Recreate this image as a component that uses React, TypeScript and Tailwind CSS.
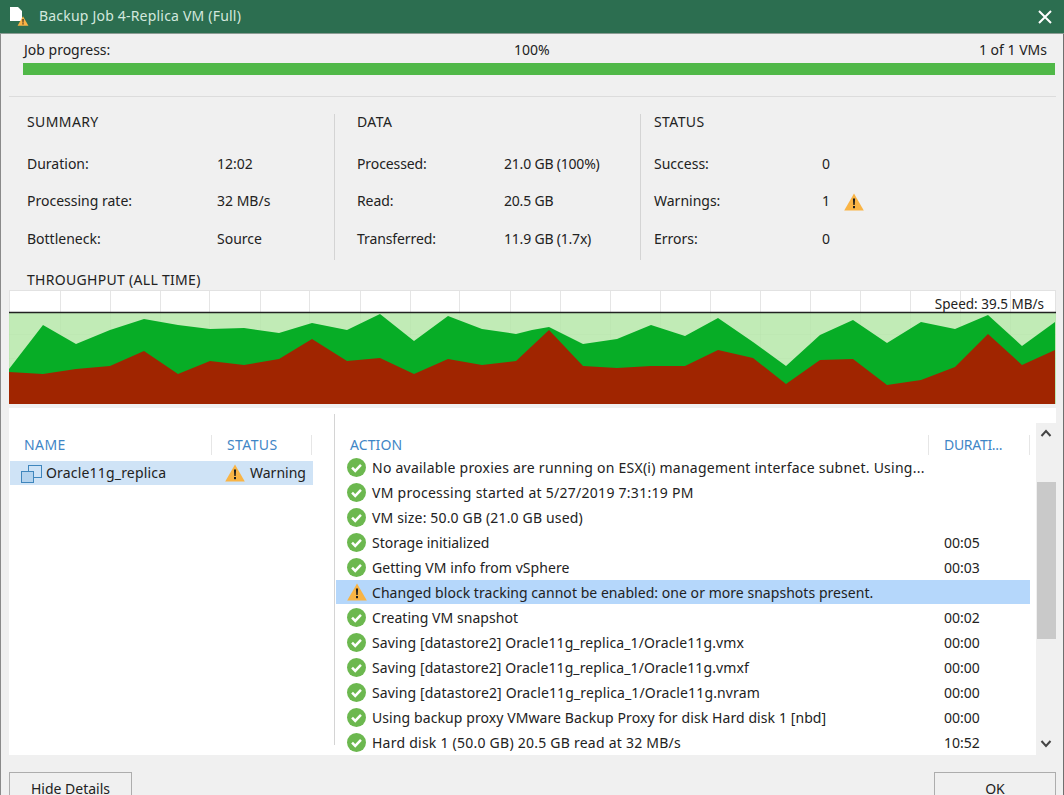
const GREEN_LINE = '9,369 43,325 76,344 110,330 144,319 178,325 210,329 244,328 279,333 312,323 347,330 380,314 414,341 448,316 482,329 516,334 532,330 549,327 583,344 617,339 651,325 685,336 718,318 753,342 786,366 820,335 853,320 887,343 921,322 955,329 988,315 1022,346 1055,322';
const RED_LINE = '9,372 43,374 76,369 110,366 144,351 178,374 210,361 244,365 279,359 312,339 347,361 380,358 414,374 448,359 482,365 516,361 532,346 549,330 583,366 617,368 651,366 685,366 718,350 753,358 786,384 820,360 853,359 887,385 921,380 955,367 988,334 1022,365 1055,350';

const ACTIONS = [
  { text: 'No available proxies are running on ESX(i) management interface subnet. Using...', time: '', track: 'tracking-[0.24px]' },
  { text: 'VM processing started at 5/27/2019 7:31:19 PM', time: '', track: 'tracking-[0.27px]' },
  { text: 'VM size: 50.0 GB (21.0 GB used)', time: '', track: 'tracking-[0.16px]' },
  { text: 'Storage initialized', time: '00:05', track: '' },
  { text: 'Getting VM info from vSphere', time: '00:03', track: 'tracking-[0.07px]' },
  { text: 'Changed block tracking cannot be enabled: one or more snapshots present.', time: '', warn: true, track: 'tracking-[0.04px]' },
  { text: 'Creating VM snapshot', time: '00:02', track: 'tracking-[0.05px]' },
  { text: 'Saving [datastore2] Oracle11g_replica_1/Oracle11g.vmx', time: '00:00', track: 'tracking-[0.11px]' },
  { text: 'Saving [datastore2] Oracle11g_replica_1/Oracle11g.vmxf', time: '00:00', track: 'tracking-[0.11px]' },
  { text: 'Saving [datastore2] Oracle11g_replica_1/Oracle11g.nvram', time: '00:00', track: 'tracking-[0.13px]' },
  { text: 'Using backup proxy VMware Backup Proxy for disk Hard disk 1 [nbd]', time: '00:00', track: 'tracking-[0.09px]' },
  { text: 'Hard disk 1 (50.0 GB) 20.5 GB read at 32 MB/s', time: '10:52', track: 'tracking-[0.24px]' },
];

const STATS = [
  {
    title: 'SUMMARY',
    box: 'w-[334px] pl-[26px] border-r border-[#d4d4d4]',
    label: 'w-[190px]',
    value: '',
    rows: [['Duration:', '12:02'], ['Processing rate:', '32 MB/s'], ['Bottleneck:', 'Source']],
  },
  {
    title: 'DATA',
    box: 'w-[306px] pl-[22px] border-r border-[#d4d4d4]',
    label: 'w-[147px] tracking-[-0.1px]',
    value: 'tracking-[-0.2px]',
    rows: [['Processed:', '21.0 GB (100%)'], ['Read:', '20.5 GB'], ['Transferred:', '11.9 GB (1.7x)']],
  },
  {
    title: 'STATUS',
    box: 'flex-1 pl-[13px]',
    label: 'w-[168px]',
    value: '',
    rows: [['Success:', '0'], ['Warnings:', '1'], ['Errors:', '0']],
  },
];

function WarnIcon({ className }: { className?: string }) {
  return (
    <svg viewBox="0 0 20 18" className={className}>
      <path d="M10 0.5 L19.8 17.5 L0.2 17.5 Z" fill="#f9b445" />
      <path d="M8.9 5.5 H11.1 L10.7 12 H9.3 Z" fill="#1c1c1c" />
      <rect x="9" y="13" width="2" height="2.2" fill="#1c1c1c" />
    </svg>
  );
}

function CheckIcon() {
  return (
    <svg viewBox="0 0 18 18" className="h-[19px] w-[19px] shrink-0">
      <circle cx="9" cy="9" r="9" fill="#6cb84f" />
      <path d="M4.8 9.2 L7.8 12.2 L13.2 6.6" fill="none" stroke="#fff" strokeWidth="2.4" />
    </svg>
  );
}

function VmIcon() {
  return (
    <svg viewBox="0 0 21 20" className="h-5 w-[21px] shrink-0" fill="none" stroke="#3f86bd" strokeWidth="1">
      <rect x="7.5" y="2.5" width="13" height="12" />
      <rect x="0.5" y="8.5" width="12" height="11" fill="#b4d3ee" />
    </svg>
  );
}

function Chart() {
  const vertical = [60, 110, 160, 209, 260, 309, 360, 410, 459, 510, 560, 610, 660, 710, 760, 810, 860, 910, 960, 1010];
  return (
    <div className="relative ml-[8px] h-[114px] w-[1047px] bg-white">
      <svg viewBox="9 290 1047 114" className="block h-[114px] w-[1047px]">
        <rect x="9.5" y="290.5" width="1046" height="113" fill="#fff" stroke="#e2e2e2" />
        {vertical.map((x) => (
          <line key={x} x1={x + 0.5} x2={x + 0.5} y1="291" y2="404" stroke="#000" strokeOpacity="0.1" />
        ))}
        <line x1="9" x2="1056" y1="334.5" y2="334.5" stroke="#000" strokeOpacity="0.08" />
        <line x1="9" x2="1056" y1="358.5" y2="358.5" stroke="#000" strokeOpacity="0.08" />
        <rect x="9" y="313" width="1047" height="91" fill="#b6e8a9" fillOpacity="0.85" />
        <polygon points={`${GREEN_LINE} 1055,404 9,404`} fill="#07ad26" />
        <polygon points={`${RED_LINE} 1055,404 9,404`} fill="#a02500" />
        <line x1="9" x2="1056" y1="312.5" y2="312.5" stroke="#222" strokeWidth="1.4" />
      </svg>
      <span className="absolute right-[12px] top-[5px] text-[13.5px] leading-[18px] text-[#222]">Speed: 39.5 MB/s</span>
    </div>
  );
}

export default function App() {
  return (
    <div className="h-[795px] w-[1064px] overflow-hidden bg-[#f0f0f0] font-['Noto_Sans',sans-serif] text-[14px] text-[#222]">
      <div className="flex h-[34px] items-center border-b border-[#8b9c94] bg-[#2c6e50] text-[#d3e8de]">
        <div className="relative ml-[10px] h-[26px] w-[20px]">
          <svg viewBox="0 0 20 26" className="h-[26px] w-[20px]">
            <path d="M0 3 H8 L12 7 V17 H0 Z" fill="#fff" />
          </svg>
          <WarnIcon className="absolute bottom-[4px] right-[1px] h-[10px] w-[12px]" />
        </div>
        <span className="mb-[2px] ml-[9px] tracking-[0.2px]">Backup Job 4-Replica VM (Full)</span>
        <svg viewBox="0 0 14 14" className="ml-auto mr-[12px] h-[14px] w-[14px]" stroke="#fff" strokeWidth="2">
          <path d="M1 1 L13 13 M13 1 L1 13" />
        </svg>
      </div>

      <div className="h-[761px] border-x border-l-[#8a8a8a] border-r-[#6f6f6f]">
        <div className="ml-[8px] h-[63px] w-[1047px] border-b border-[#dcdcdc] pl-[14px]">
          <div className="flex h-[29px] items-center pr-[9px] pt-[2px] pb-[1px]">
            <span className="w-[491px] pl-[1px]">Job progress:</span>
            <span>100%</span>
            <span className="ml-auto">1 of 1 VMs</span>
          </div>
          <div className="h-[12px] w-[1032px] bg-[#50b848]" />
        </div>

        <div className="flex pt-[17px]">
          {STATS.map((col) => (
            <div key={col.title} className={`h-[146px] ${col.box}`}>
              <div className="h-4 leading-4 tracking-[0.4px]">{col.title}</div>
              <div className="mt-[23px] flex flex-col gap-[17.5px]">
                {col.rows.map(([label, value]) => (
                  <div key={label} className="flex h-5 items-center">
                    <span className={col.label}>{label}</span>
                    <span className={col.value}>{value}</span>
                    {label === 'Warnings:' && <WarnIcon className="ml-[14px] h-[18px] w-5 translate-y-px" />}
                  </div>
                ))}
              </div>
            </div>
          ))}
        </div>

        <div className="mt-[10px] h-5 pl-[26px] leading-5 tracking-[0.3px]">THROUGHPUT (ALL TIME)</div>
        <Chart />

        <div className="ml-[8px] mt-[4px] flex h-[347px] w-[1047px] bg-white">
          <div className="my-[6px] mb-[10px] w-[326px] border-r border-[#d4d4d4]">
            <div className="mt-[21px] flex h-5 items-center text-[#3f86c6]">
              <span className="w-[203px] border-r border-[#e6e6e6] pl-[15px] leading-5 tracking-[0.4px]">NAME</span>
              <span className="w-[100px] border-r border-[#e6e6e6] pl-[15px] leading-5 tracking-[0.4px]">STATUS</span>
            </div>
            <div className="ml-[1px] mt-[6px] flex h-6 w-[303px] items-center bg-[#cfe3f6]">
              <span className="ml-[11px]"><VmIcon /></span>
              <span className="ml-[4px] w-[179px] -translate-y-px tracking-[0.18px]">Oracle11g_replica</span>
              <WarnIcon className="h-[18px] w-5" />
              <span className="ml-[5px] -translate-y-px">Warning</span>
            </div>
          </div>

          <div className="flex min-w-0 flex-1 flex-col">
            <div className="mt-[27px] flex h-5 shrink-0 items-center text-[#3f86c6]">
              <span className="w-[594px] border-r border-[#e6e6e6] pl-[15px] leading-5 tracking-[0.1px]">ACTION</span>
              <span className="w-[101px] border-r border-[#e6e6e6] pl-[15px] leading-5 tracking-[-0.3px]">DURATI...</span>
            </div>
            <div>
              {ACTIONS.map((a) => (
                <div key={a.text} className="h-[25px]">
                  <div className={`ml-[1px] flex w-[694px] items-center ${a.warn ? 'h-[24px] bg-[#b5d7fb]' : 'h-[25px]'}`}>
                    <span className="ml-[11px] flex w-[25px] shrink-0 items-center">
                      {a.warn ? <WarnIcon className="h-[18px] w-5" /> : <CheckIcon />}
                    </span>
                    <span className={`w-[572px] shrink-0 whitespace-nowrap ${a.track}`}>{a.text}</span>
                    <span>{a.time}</span>
                  </div>
                </div>
              ))}
            </div>
          </div>

          <div className="mt-[15px] flex w-[20px] shrink-0 flex-col items-center bg-[#f0f0f0] text-[#555]">
            <svg viewBox="0 0 12 8" className="mt-[6px] h-2 w-3" fill="none" stroke="#444" strokeWidth="2"><path d="M1.5 7 L6 2 L10.5 7" /></svg>
            <div className="mt-[45px] h-[157px] w-[19px] bg-[#c9c9c9]" />
            <svg viewBox="0 0 12 8" className="mt-[101px] h-2 w-3" fill="none" stroke="#444" strokeWidth="2"><path d="M1.5 1 L6 6 L10.5 1" /></svg>
          </div>
        </div>

        <div className="ml-[8px] mt-[17px] flex w-[1047px] justify-between">
          <button className="h-8 w-[123px] border border-[#adadad] bg-[#f0f0f0]">Hide Details</button>
          <button className="h-8 w-[122px] border border-[#adadad] bg-[#f0f0f0]">OK</button>
        </div>
      </div>
    </div>
  );
}
